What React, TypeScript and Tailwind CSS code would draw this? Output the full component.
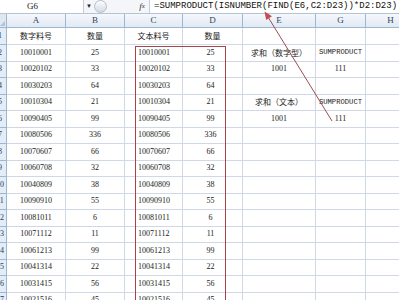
import React from 'react';

const colW = [59, 59, 58, 60, 73, 50, 50];
const colLetters = ['A', 'B', 'C', 'D', 'E', 'G', 'H'];

const codes = [
  '10010001', '10020102', '10030203', '10010304', '10090405', '10080506', '10070607', '10060708',
  '10040809', '10090910', '10081011', '10071112', '10061213', '10041314', '10031415', '10021516',
];
const qty = ['25', '33', '64', '21', '99', '336', '66', '32', '38', '55', '6', '11', '99', '22', '56', '45'];

const side: Record<number, [string, string]> = {
  2: ['求和（数字型）', 'SUMPRODUCT'],
  3: ['1001', '111'],
  5: ['求和（文本）', 'SUMPRODUCT'],
  6: ['1001', '111'],
};

const cjk = { fontFamily: '"Noto Sans CJK SC", "Noto Sans", sans-serif' };
const num = { fontFamily: '"Liberation Serif", "Noto Sans CJK SC", serif' };

const RowHead: React.FC<{ n: number | string; h: string }> = ({ n, h }) => (
  <div className={`w-[7px] shrink-0 overflow-hidden bg-[#e4ecf7] border-r border-b border-[#9eb6ce] ${h}`}>
    <div className="w-[14px] -ml-[7px] h-full flex items-center justify-center text-[8px] text-[#27415f]" style={num}>
      {n}
    </div>
  </div>
);

const Cell: React.FC<{ w: number; children?: React.ReactNode; className?: string; style?: React.CSSProperties }> = ({ w, children, className = '', style }) => (
  <div
    className={`shrink-0 h-full border-r border-b border-[#d0d7e5] flex items-center whitespace-nowrap overflow-hidden text-[#1a1a1a] ${className}`}
    style={{ width: w, ...style }}
  >
    {children}
  </div>
);

export default function App() {
  return (
    <div className="relative w-[399px] h-[300px] overflow-hidden bg-white">
      {/* formula bar */}
      <div className="flex h-[14px] border-b border-[#b5c3d6] bg-[#f4f6f9]">
        <div className="w-[84px] shrink-0 bg-white border-r border-[#c4ccd6] flex items-center pl-[27px] text-[9px] text-[#222]" style={num}>
          G6
        </div>
        <div className="w-[10px] flex items-center justify-center text-[6px] text-[#222]">▼</div>
        <div className="w-[15px] flex items-center">
          <div className="w-[13px] h-[13px] rounded-full bg-gradient-to-b from-[#fdfdfe] to-[#d3dae3] border border-[#b6bfca]" />
        </div>
        <div className="w-[26px]" />
        <div className="w-[14px] flex items-center justify-center italic text-[9px] text-[#333] font-serif" style={{ fontFamily: '"Liberation Serif", serif' }}>
          f<span className="text-[7px]">x</span>
        </div>
        <div className="flex-1 bg-white border-l border-[#c4ccd6] flex items-center pl-[4px] text-[9px] text-[#111] whitespace-nowrap overflow-hidden" style={{ fontFamily: '"Liberation Mono", monospace' }}>
          =SUMPRODUCT(ISNUMBER(FIND(E6,C2:D23))*D2:D23)
        </div>
      </div>

      {/* column headers */}
      <div className="flex h-[14px]">
        <div className="w-[7px] shrink-0 bg-[#dfe7f2] border-r border-b border-[#9eb6ce] relative">
          <div className="absolute right-[1px] bottom-[1px] w-0 h-0 border-l-[5px] border-l-transparent border-b-[5px] border-b-[#b3c3d8]" />
        </div>
        {colLetters.map((l, i) => (
          <div
            key={l}
            className="shrink-0 h-full bg-gradient-to-b from-[#f5f8fc] to-[#e1e9f4] border-r border-b border-[#9eb6ce] flex items-center justify-center text-[9px] text-[#34465e]"
            style={{ width: colW[i], ...num }}
          >
            {l}
          </div>
        ))}
      </div>

      {/* row 1 */}
      <div className="flex h-[17px]">
        <RowHead n={1} h="h-full" />
        <Cell w={colW[0]} className="justify-center text-[8px]" style={cjk}>数字料号</Cell>
        <Cell w={colW[1]} className="justify-center text-[8px]" style={cjk}>数量</Cell>
        <Cell w={colW[2]} className="justify-center text-[8px]" style={cjk}>文本料号</Cell>
        <Cell w={colW[3]} className="justify-center text-[8px]" style={cjk}>数量</Cell>
        <Cell w={colW[4]} />
        <Cell w={colW[5]} />
        <Cell w={colW[6]} />
      </div>

      {/* data rows */}
      {codes.map((c, i) => {
        const r = i + 2;
        const s = side[r];
        return (
          <div key={r} className="flex h-[16.5px]">
            <RowHead n={r} h="h-full" />
            <Cell w={colW[0]} className="justify-center text-[8px]" style={num}>{c}</Cell>
            <Cell w={colW[1]} className="justify-center text-[8px]" style={num}>{qty[i]}</Cell>
            <Cell w={colW[2]} className="pl-[13px] text-[8px]" style={num}>{c}</Cell>
            <Cell w={colW[3]} className="justify-center pr-[4px] text-[8px]" style={num}>{qty[i]}</Cell>
            <Cell w={colW[4]} className="justify-center text-[8px]" style={s && /\d/.test(s[0]) ? num : cjk}>{s ? s[0] : null}</Cell>
            <Cell
              w={colW[5]}
              className={`justify-center ${s && s[1] === 'SUMPRODUCT' ? 'text-[7.2px]' : 'text-[8px]'}`}
              style={s && s[1] === 'SUMPRODUCT' ? { fontFamily: '"Liberation Mono", monospace' } : num}
            >
              {s ? s[1] : null}
            </Cell>
            <Cell w={colW[6]} />
          </div>
        );
      })}

      {/* red highlight box */}
      <div className="absolute left-[135px] top-[46px] w-[91px] h-[270px] border-[1.5px] border-[#a8434a]" />

      {/* arrow */}
      <svg className="absolute left-0 top-0 pointer-events-none" width="399" height="300" viewBox="0 0 399 300">
        <line x1="332" y1="121" x2="268" y2="17" stroke="#9a4f55" strokeWidth="1" />
        <polygon points="264.5,11.5 272,16.2 266.2,20" fill="#c0504d" />
      </svg>
    </div>
  );
}
